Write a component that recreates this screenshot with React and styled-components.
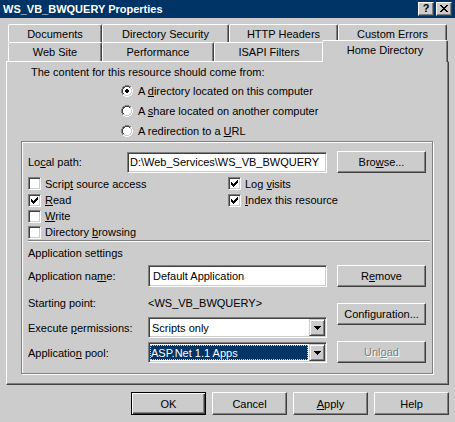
import React from 'react';
import styled, { createGlobalStyle, css } from 'styled-components';

const FACE = '#cccccc';
const SHADOW = '#808080';
const DARK = '#404040';
const HILITE = '#ffffff';
const NAVY = '#003366';

const GlobalStyle = createGlobalStyle`
  html, body { margin: 0; padding: 0; background: ${FACE}; }
  body {
    font-family: "Liberation Sans", Arial, sans-serif;
    font-size: 11px;
    color: #000;
  }
  #root { width: 455px; height: 422px; overflow: hidden; }
  * { box-sizing: border-box; }
  u { text-decoration: underline; text-underline-offset: 1px; }
`;

const Window = styled.div`
  width: 455px;
  height: 422px;
  background: ${FACE};
  display: flex;
  flex-direction: column;
`;

const TitleBar = styled.div`
  height: 18px;
  background: ${NAVY};
  display: flex;
  align-items: center;
  padding: 0 3px;
`;

const TitleText = styled.div`
  flex: 1;
  color: #fff;
  font-weight: bold;
  line-height: 18px;
  white-space: nowrap;
`;

const CaptionButtons = styled.div`
  display: flex;
  gap: 2px;
`;

const CaptionButton = styled.div`
  width: 16px;
  height: 14px;
  background: ${FACE};
  border: 1px solid;
  border-color: ${HILITE} ${DARK} ${DARK} ${HILITE};
  box-shadow: inset -1px -1px 0 ${SHADOW};
  display: flex;
  align-items: center;
  justify-content: center;
  font-weight: bold;
  font-size: 11px;
  line-height: 1;
  padding-bottom: 1px;
`;

const TabStrip = styled.div`
  margin-top: 6px;
  padding-left: 8px;
  display: flex;
  flex-direction: column;
`;

const TabRow = styled.div`
  display: flex;
  align-items: flex-start;
  height: ${(p) => p.$h}px;
`;

const Tab = styled.div`
  width: ${(p) => p.$w}px;
  height: ${(p) => p.$h}px;
  flex: none;
  background: ${FACE};
  border: 1px solid;
  border-bottom: none;
  border-color: ${HILITE} ${DARK} transparent ${HILITE};
  box-shadow: inset -1px 0 0 ${SHADOW};
  border-radius: 2px 2px 0 0;
  text-align: center;
  white-space: nowrap;
  padding-top: 1px;
  line-height: 16px;
  ${(p) =>
    p.$selected &&
    css`
      position: relative;
      z-index: 2;
      width: ${p.$w + 4}px;
      height: ${p.$h + 3}px;
      margin: -2px -2px 0 -2px;
    `}
`;

const Panel = styled.div`
  margin-left: 6px;
  width: 443px;
  height: 324px;
  border: 1px solid;
  border-color: ${HILITE} ${DARK} ${DARK} ${HILITE};
  box-shadow: inset -1px -1px 0 ${SHADOW};
  padding-top: 3px;
  display: flex;
  flex-direction: column;
`;

const Intro = styled.div`
  padding-left: 24px;
  line-height: 14px;
`;

const RadioList = styled.div`
  margin: 2px 0 0 114px;
  display: flex;
  flex-direction: column;
`;

const RadioRow = styled.div`
  height: 20px;
  display: flex;
  align-items: center;
  gap: 5px;
  white-space: nowrap;
`;

const GroupBox = styled.div`
  margin-left: 14px;
  width: 412px;
  height: 233px;
  border: 1px solid ${SHADOW};
  box-shadow: inset 1px 1px 0 ${HILITE}, 1px 1px 0 ${HILITE};
  padding: 9px 0 0 6px;
  display: flex;
  flex-direction: column;
`;

const FieldRow = styled.div`
  display: flex;
  align-items: center;
  height: ${(p) => p.$h}px;
  margin-top: ${(p) => p.$mt || 0}px;
  white-space: nowrap;
`;

const FieldLabel = styled.div`
  width: ${(p) => p.$w}px;
  flex: none;
`;

const sunken = css`
  border: 1px solid;
  border-color: ${SHADOW} ${HILITE} ${HILITE} ${SHADOW};
  box-shadow: inset 1px 1px 0 ${DARK}, inset -1px -1px 0 ${FACE};
`;

const TextField = styled.input.attrs({ readOnly: true, type: 'text' })`
  ${sunken};
  width: ${(p) => p.$w}px;
  height: ${(p) => p.$h}px;
  flex: none;
  margin: 0;
  padding: 0 0 0 ${(p) => p.$pad}px;
  background: #fff;
  font: inherit;
  color: #000;
  outline: none;
`;

const PushButton = styled.button`
  width: ${(p) => p.$w}px;
  height: ${(p) => p.$h}px;
  margin: ${(p) => p.$mt || 0}px 0 0 ${(p) => p.$ml || 0}px;
  flex: none;
  padding: 0;
  background: ${FACE};
  font: inherit;
  color: #000;
  border: 1px solid;
  border-color: ${HILITE} ${DARK} ${DARK} ${HILITE};
  box-shadow: inset -1px -1px 0 ${SHADOW};
  outline: none;
  white-space: nowrap;
  ${(p) =>
    p.$default &&
    css`
      border: 1px solid #000;
      box-shadow: inset 1px 1px 0 ${HILITE}, inset -1px -1px 0 ${DARK},
        inset -2px -2px 0 ${SHADOW};
    `}
  &:disabled {
    color: ${SHADOW};
    text-shadow: 1px 1px 0 ${HILITE};
  }
`;

const CheckGrid = styled.div`
  margin-top: 2px;
  display: grid;
  grid-template-columns: 200px 1fr;
  grid-template-rows: 17px 16px 16px 16px;
  grid-auto-flow: column;
`;

const CheckItem = styled.div`
  display: flex;
  align-items: center;
  gap: 4px;
  white-space: nowrap;
`;

const CheckBoxBox = styled.span`
  ${sunken};
  width: 13px;
  height: 13px;
  flex: none;
  background: #fff;
  display: flex;
  align-items: center;
  justify-content: center;
`;

const Separator = styled.div`
  width: 402px;
  height: 2px;
  border-top: 1px solid ${SHADOW};
  border-bottom: 1px solid ${HILITE};
`;

const SectionTitle = styled.div`
  margin-top: 4px;
  line-height: 14px;
`;

const AppSettings = styled.div`
  margin-top: 5px;
  display: flex;
`;

const AppFields = styled.div`
  width: 299px;
  display: flex;
  flex-direction: column;
`;

const AppButtons = styled.div`
  margin-left: 10px;
  display: flex;
  flex-direction: column;
`;

const Combo = styled.div`
  ${sunken};
  width: 179px;
  height: 21px;
  flex: none;
  background: #fff;
  padding: 1px;
  display: flex;
`;

const ComboValue = styled.div`
  flex: 1;
  display: flex;
  align-items: center;
  padding-left: 2px;
  white-space: nowrap;
  ${(p) =>
    p.$selected &&
    css`
      margin: 1px 1px 1px 0;
      padding-left: 1px;
      background: ${NAVY};
      color: #fff;
      outline: 1px dotted #ffcc66;
      outline-offset: -1px;
    `}
`;

const ComboButton = styled.div`
  width: 16px;
  height: 17px;
  flex: none;
  background: ${FACE};
  border: 1px solid;
  border-color: ${FACE} ${DARK} ${DARK} ${FACE};
  box-shadow: inset 1px 1px 0 ${HILITE}, inset -1px -1px 0 ${SHADOW};
  display: flex;
  align-items: center;
  justify-content: center;
`;

const DialogButtons = styled.div`
  margin-top: 7px;
  padding-right: 6px;
  display: flex;
  justify-content: flex-end;
  gap: 6px;
`;

/* ---------- pixel glyphs ---------- */

const Pixels = ({ w, h, d, color = '#000' }) => (
  <svg width={w} height={h} viewBox={`0 0 ${w} ${h}`} shapeRendering="crispEdges">
    <path d={d} fill={color} />
  </svg>
);

const CHECK =
  'M6 0h1v1h-1z M5 1h2v1h-2z M0 2h1v1h-1z M4 2h3v1h-3z M0 3h2v1h-2z M3 3h3v1h-3z M0 4h5v1h-5z M1 5h3v1h-3z M2 6h1v1h-1z';
const CLOSE =
  'M0 0h2v1h-2z M6 0h2v1h-2z M1 1h2v1h-2z M5 1h2v1h-2z M2 2h4v1h-4z M3 3h2v1h-2z M2 4h4v1h-4z M1 5h2v1h-2z M5 5h2v1h-2z M0 6h2v1h-2z M6 6h2v1h-2z';
const ARROW = 'M0 0h7v1h-7z M1 1h5v1h-5z M2 2h3v1h-3z M3 3h1v1h-1z';

const RADIO_OUTER = [[4, 5, 6, 7], [2, 3, 8, 9], [1, 10], [1, 10], [0, 11], [0, 11], [0, 11], [0, 11], [1, 10], [1, 10], [2, 3, 8, 9], [4, 5, 6, 7]];
const RADIO_INNER = [[], [4, 5, 6, 7], [2, 3, 8, 9], [2, 9], [1, 10], [1, 10], [1, 10], [1, 10], [2, 9], [2, 3, 8, 9], [4, 5, 6, 7], []];
const RADIO_FILL = [null, null, [4, 7], [3, 8], [2, 9], [2, 9], [2, 9], [2, 9], [3, 8], [4, 7], null, null];
const RADIO_DOT = [[4, 5, 6], [5, 4, 7], [6, 4, 7], [7, 5, 6]];

const RadioMark = ({ checked }) => {
  const rects = [];
  RADIO_FILL.forEach((r, y) => {
    if (r) rects.push(<rect key={`f${y}`} x={r[0]} y={y} width={r[1] - r[0] + 1} height={1} fill="#fff" />);
  });
  RADIO_OUTER.forEach((xs, y) =>
    xs.forEach((x) =>
      rects.push(<rect key={`o${x}-${y}`} x={x} y={y} width={1} height={1} fill={x + y <= 10 ? SHADOW : HILITE} />)
    )
  );
  RADIO_INNER.forEach((xs, y) =>
    xs.forEach((x) =>
      rects.push(<rect key={`i${x}-${y}`} x={x} y={y} width={1} height={1} fill={x + y <= 10 ? DARK : FACE} />)
    )
  );
  if (checked) {
    RADIO_DOT.forEach(([y, a, b]) =>
      rects.push(<rect key={`d${y}`} x={a} y={y} width={b - a + 1} height={1} fill="#000" />)
    );
  }
  return (
    <svg width="12" height="12" viewBox="0 0 12 12" shapeRendering="crispEdges" style={{ flex: 'none' }}>
      {rects}
    </svg>
  );
};

const CheckBox = ({ checked }) => (
  <CheckBoxBox>{checked && <Pixels w={7} h={7} d={CHECK} />}</CheckBoxBox>
);

const Check = ({ checked, children }) => (
  <CheckItem>
    <CheckBox checked={checked} />
    <span>{children}</span>
  </CheckItem>
);

const Radio = ({ checked, children }) => (
  <RadioRow>
    <RadioMark checked={checked} />
    <span>{children}</span>
  </RadioRow>
);

const Dropdown = ({ value, selected }) => (
  <Combo>
    <ComboValue $selected={selected}>{value}</ComboValue>
    <ComboButton>
      <Pixels w={7} h={4} d={ARROW} />
    </ComboButton>
  </Combo>
);

export default function App() {
  return (
    <>
      <GlobalStyle />
      <Window>
        <TitleBar>
          <TitleText>WS_VB_BWQUERY Properties</TitleText>
          <CaptionButtons>
            <CaptionButton>?</CaptionButton>
            <CaptionButton>
              <Pixels w={8} h={7} d={CLOSE} />
            </CaptionButton>
          </CaptionButtons>
        </TitleBar>

        <TabStrip>
          <TabRow $h={18}>
            <Tab $w={94} $h={18}>Documents</Tab>
            <Tab $w={127} $h={18}>Directory Security</Tab>
            <Tab $w={109} $h={18}>HTTP Headers</Tab>
            <Tab $w={109} $h={18}>Custom Errors</Tab>
          </TabRow>
          <TabRow $h={19}>
            <Tab $w={94} $h={19}>Web Site</Tab>
            <Tab $w={112} $h={19}>Performance</Tab>
            <Tab $w={110} $h={19}>ISAPI Filters</Tab>
            <Tab $w={122} $h={19} $selected>Home Directory</Tab>
          </TabRow>
        </TabStrip>

        <Panel>
          <Intro>The content for this resource should come from:</Intro>
          <RadioList>
            <Radio checked>
              A <u>d</u>irectory located on this computer
            </Radio>
            <Radio>
              A <u>s</u>hare located on another computer
            </Radio>
            <Radio>
              A redirection to a <u>U</u>RL
            </Radio>
          </RadioList>

          <GroupBox>
            <FieldRow $h={22}>
              <FieldLabel $w={99}>
                Lo<u>c</u>al path:
              </FieldLabel>
              <TextField $w={200} $h={21} $pad={2} value="D:\Web_Services\WS_VB_BWQUERY" />
              <PushButton $w={89} $h={22} $ml={10}>
                Bro<u>w</u>se...
              </PushButton>
            </FieldRow>

            <CheckGrid>
              <Check>
                Scrip<u>t</u> source access
              </Check>
              <Check checked>
                <u>R</u>ead
              </Check>
              <Check>
                <u>W</u>rite
              </Check>
              <Check>
                Directory <u>b</u>rowsing
              </Check>
              <Check checked>
                Log <u>v</u>isits
              </Check>
              <Check checked>
                <u>I</u>ndex this resource
              </Check>
            </CheckGrid>

            <Separator />
            <SectionTitle>Application settings</SectionTitle>

            <AppSettings>
              <AppFields>
                <FieldRow $h={22}>
                  <FieldLabel $w={120}>
                    Application na<u>m</u>e:
                  </FieldLabel>
                  <TextField $w={179} $h={22} $pad={4} value="Default Application" />
                </FieldRow>
                <FieldRow $h={21} $mt={5}>
                  <FieldLabel $w={120}>Starting point:</FieldLabel>
                  <span>&lt;WS_VB_BWQUERY&gt;</span>
                </FieldRow>
                <FieldRow $h={21} $mt={4}>
                  <FieldLabel $w={120}>
                    Execute <u>p</u>ermissions:
                  </FieldLabel>
                  <Dropdown value="Scripts only" />
                </FieldRow>
                <FieldRow $h={21} $mt={4}>
                  <FieldLabel $w={120}>
                    Applicatio<u>n</u> pool:
                  </FieldLabel>
                  <Dropdown value="ASP.Net 1.1 Apps" selected />
                </FieldRow>
              </AppFields>
              <AppButtons>
                <PushButton $w={89} $h={22}>
                  R<u>e</u>move
                </PushButton>
                <PushButton $w={89} $h={22} $mt={16}>
                  Confi<u>g</u>uration...
                </PushButton>
                <PushButton $w={89} $h={22} $mt={16} disabled>
                  Unl<u>o</u>ad
                </PushButton>
              </AppButtons>
            </AppSettings>
          </GroupBox>
        </Panel>

        <DialogButtons>
          <PushButton $w={75} $h={23} $default>
            OK
          </PushButton>
          <PushButton $w={75} $h={23}>
            Cancel
          </PushButton>
          <PushButton $w={75} $h={23}>
            <u>A</u>pply
          </PushButton>
          <PushButton $w={75} $h={23}>
            Help
          </PushButton>
        </DialogButtons>
      </Window>
    </>
  );
}
